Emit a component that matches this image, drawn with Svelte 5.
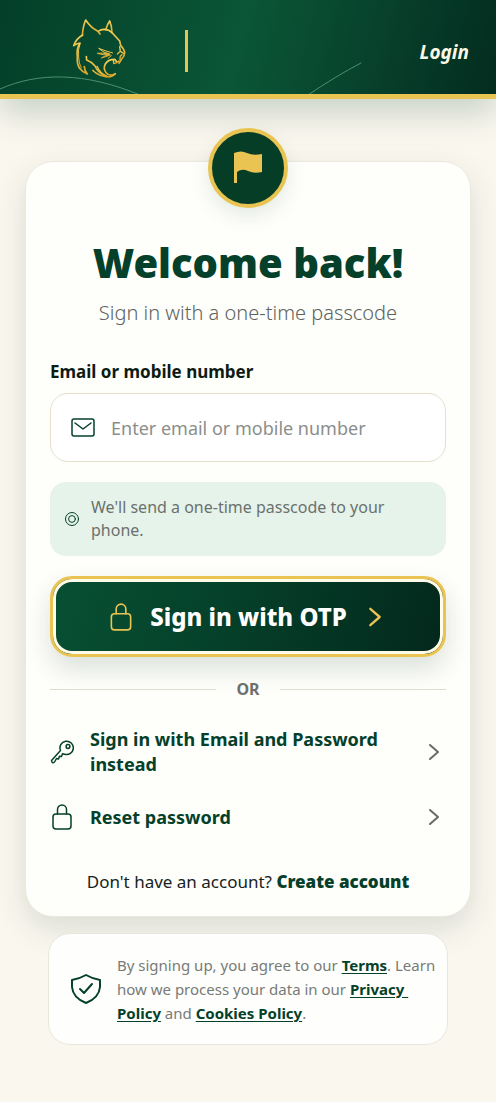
<script>
  let contact = $state('');
</script>

{#snippet lock()}
  <svg class="icon" viewBox="0 0 24 28" aria-hidden="true">
    <rect x="3" y="11" width="18" height="15" rx="3" />
    <path d="M7.500 11V6.500a4.500 4.500 0 0 1 9 0V11" />
  </svg>
{/snippet}

{#snippet chevron()}
  <svg class="chevron" viewBox="0 0 12 20" aria-hidden="true">
    <path d="M2 3l8 7-8 7" />
  </svg>
{/snippet}

<div class="page">
  <header class="topbar">
    <svg class="swoosh" viewBox="0 0 496 94" preserveAspectRatio="none" aria-hidden="true">
      <path d="M0 89C38 72 85 72 140 95M308 95Q336 76 361 63" />
    </svg>
    <a class="brand" href="#home" aria-label="Home">
      <svg class="logo" viewBox="0 0 240 225" aria-hidden="true">
        <defs>
          <linearGradient id="gold" x1="0" y1="0" x2="0" y2="1">
            <stop offset="0" stop-color="#f2d057" />
            <stop offset="1" stop-color="#d9a52c" />
          </linearGradient>
        </defs>
        <g fill="none" stroke="url(#gold)" stroke-width="5" stroke-linecap="round" stroke-linejoin="round">
          <path d="M67 76Q69 48 77 30Q92 52 109 61Q116 65 120 72" />
          <path d="M137 59Q142 43 149 33Q156 48 156 68" />
          <path d="M117 62Q140 52 157 69Q168 81 179 93L182 106Q194 120 194 128Q194 138 185 147L177 160" />
          <path d="M179 110L181 124L191 130M181 124L172 132M186 134Q179 138 180 148" stroke-width="4" />
          <path d="M68 75Q48 86 41 107Q49 101 60 99Q48 118 52 141Q50 159 58 174Q66 185 82 192Q73 180 73 170" />
          <path d="M60 101Q53 120 56 141Q56 160 64 174" stroke-width="3" />
          <path d="M79 140L80 150Q96 156 105 168Q113 188 139 200" />
          <path d="M166 191Q151 200 140 190Q128 176 136 162Q144 148 164 148L170 155" />
          <path d="M98 181Q116 200 147 201Q160 200 166 191M111 169Q119 190 143 200" stroke-width="4" />
          <path d="M160 149L161 161Q169 160 177 153" stroke-width="4" />
          <path d="M158 129Q133 122 116 115Q131 129 149 132Q126 128 112 130Q129 136 148 134Q134 137 124 144Q138 140 151 135M154 137L144 146" stroke-width="3" />
        </g>
      </svg>
    </a>
    <span class="rule"></span>
    <a class="login" href="#login">Login</a>
  </header>

  <main>
    <section class="card">
      <div class="badge">
        <svg viewBox="0 0 30 34" aria-hidden="true">
          <path d="M1 2Q8-1 14 2T29 3V21Q21 23 15 20T4 21V32H1Z" />
        </svg>
      </div>

      <h1>Welcome back!</h1>
      <p class="subtitle">Sign in with a one-time passcode</p>

      <form onsubmit={(e) => e.preventDefault()}>
        <label for="contact">Email or mobile number</label>
        <div class="field">
          <svg class="mail" viewBox="0 0 24 20" aria-hidden="true">
            <rect x="1" y="1" width="22" height="17" rx="2" />
            <path d="M4 5l8 6 8-6" />
          </svg>
          <input id="contact" type="text" placeholder="Enter email or mobile number" bind:value={contact} />
        </div>

        <div class="hint">
          <svg viewBox="0 0 16 16" aria-hidden="true">
            <circle cx="8" cy="8" r="6.5" />
            <circle cx="8" cy="8" r="3.4" />
          </svg>
          <p>We'll send a one-time passcode to your phone.</p>
        </div>

        <button class="submit" type="submit">
          {@render lock()}
          <span>Sign in with OTP</span>
          {@render chevron()}
        </button>
      </form>

      <div class="divider"><span>OR</span></div>

      <nav class="options">
        <a href="#password">
          <svg class="icon" viewBox="0 0 24 28" aria-hidden="true">
            <path d="M10.500 12.500A6.700 6.700 0 1 1 14.500 16.200L12.500 15.800L11.500 18.500L9.500 18.200L8.500 21L6.500 20.500L4.500 24Q2 26 1.500 22.500Z" />
            <circle cx="18" cy="8.500" r="1.900" />
          </svg>
          <span>Sign in with Email and Password instead</span>
          {@render chevron()}
        </a>
        <a href="#reset">
          {@render lock()}
          <span>Reset password</span>
          {@render chevron()}
        </a>
      </nav>

      <p class="signup">Don't have an account? <a href="#create">Create account</a></p>
    </section>

    <aside class="legal">
      <svg viewBox="0 0 32 32" aria-hidden="true">
        <path d="M16 2Q23 6 30 7V14Q29 25 16 30Q3 25 2 14V7Q9 6 16 2Z" />
        <path d="M10 16l4 4 8-9" />
      </svg>
      <p>
        By signing up, you agree to our <a href="#terms">Terms</a>. Learn how we process your data in our
        <a href="#privacy">Privacy&nbsp;<wbr />Policy</a> and <a href="#cookies">Cookies Policy</a>.
      </p>
    </aside>
  </main>
</div>

<style>
  :global(body) {
    margin: 0;
    background: #faf7ef;
  }

  .page {
    --green: #04402a;
    --gold: #e9c452;
    --muted: #6c716d;
    min-height: 100vh;
    font-family: 'Noto Sans', sans-serif;
    color: #17221c;
  }

  .page,
  .page * {
    box-sizing: border-box;
  }

  h1,
  p {
    margin: 0;
  }

  svg {
    flex: none;
    fill: none;
    stroke: var(--green);
    stroke-linecap: round;
    stroke-linejoin: round;
  }

  .topbar {
    position: relative;
    display: flex;
    align-items: center;
    height: 99px;
    padding: 0 27px 0 60px;
    border-bottom: 5px solid var(--gold);
    background: linear-gradient(105deg, #043f29 0%, #0a5636 48%, #08432d 72%, #032c1f 100%);
    box-shadow: 0 14px 32px rgba(4, 64, 42, 0.2);
  }

  .swoosh {
    position: absolute;
    inset: 0;
    width: 100%;
    height: 100%;
    stroke: #4b8f70;
    stroke-width: 1;
  }

  .brand {
    position: relative;
    display: flex;
  }

  .logo {
    width: 80px;
    height: 75px;
  }

  .rule {
    width: 3px;
    height: 42px;
    margin: 8px 0 0 45px;
    background: var(--gold);
  }

  .login {
    position: relative;
    margin: 10px 0 0 auto;
    color: #fbf9e6;
    font-size: 19px;
    font-style: italic;
    font-weight: 700;
    text-decoration: none;
  }

  main {
    padding: 62px 25px 56px;
  }

  .card {
    position: relative;
    padding: 76px 24px 20px;
    border: 1px solid #ebe9df;
    border-radius: 28px;
    background: #fefefa;
    box-shadow: 0 12px 32px rgba(4, 50, 32, 0.13);
  }

  .badge {
    position: absolute;
    top: -34px;
    left: 50%;
    display: grid;
    place-items: center;
    width: 80px;
    height: 80px;
    border: 4px solid var(--gold);
    border-radius: 50%;
    background: #053d27;
    box-shadow: 0 8px 20px rgba(4, 64, 42, 0.1);
    transform: translateX(-50%);
  }

  .badge svg {
    width: 30px;
    height: 34px;
    fill: var(--gold);
    stroke: none;
  }

  h1 {
    color: var(--green);
    font-size: 40px;
    font-weight: 900;
    line-height: 50px;
    text-align: center;
  }

  .subtitle {
    margin-top: 11px;
    color: #5c625e;
    font-size: 20px;
    font-weight: 300;
    line-height: 28px;
    text-align: center;
  }

  label {
    display: block;
    margin-top: 33px;
    color: #0d1b13;
    font-size: 17px;
    font-weight: 700;
    line-height: 24px;
  }

  .field {
    display: flex;
    align-items: center;
    gap: 16px;
    height: 69px;
    margin-top: 9px;
    padding: 0 20px;
    border: 1px solid #e5dfcf;
    border-radius: 18px;
    background: #fff;
  }

  .mail {
    width: 24px;
    height: 20px;
    stroke-width: 1.5;
  }

  input {
    flex: 1;
    min-width: 0;
    padding: 0;
    border: 0;
    outline: 0;
    background: none;
    color: #17221c;
    font: 400 18px/28px 'Noto Sans', sans-serif;
  }

  input::placeholder {
    color: #8b8e8b;
    opacity: 1;
  }

  .hint {
    display: flex;
    align-items: center;
    gap: 11px;
    margin-top: 20px;
    padding: 14px;
    border-radius: 16px;
    background: #e5f3eb;
    color: var(--muted);
    font-size: 16px;
    line-height: 23px;
  }

  .hint svg {
    width: 16px;
    height: 16px;
  }

  .submit {
    display: flex;
    align-items: center;
    justify-content: center;
    gap: 16px;
    width: 100%;
    height: 81px;
    margin-top: 20px;
    padding: 3px 9px 3px 3px;
    border: 3px solid var(--gold);
    border-radius: 22px;
    background: linear-gradient(105deg, #075033, #05402a 45%, #03281c);
    box-shadow:
      inset 0 0 0 3px #fffbe9,
      0 12px 26px rgba(4, 50, 32, 0.14);
    color: #fff;
    font: 800 24px/30px 'Noto Sans', sans-serif;
  }

  .icon {
    width: 24px;
    height: 28px;
    stroke-width: 1.5;
  }

  .submit .icon {
    width: 26px;
    height: 30px;
    stroke: var(--gold);
  }

  .chevron {
    width: 12px;
    height: 20px;
    stroke: #666b68;
    stroke-width: 2;
  }

  .submit .chevron {
    width: 14px;
    height: 24px;
    margin-left: 5px;
    stroke: var(--gold);
  }

  .divider {
    display: flex;
    align-items: center;
    gap: 20px;
    margin-top: 20px;
    color: var(--muted);
    font-size: 16px;
    font-weight: 700;
    line-height: 24px;
  }

  .divider::before,
  .divider::after {
    content: '';
    flex: 1;
    height: 1px;
    background: #deddd2;
  }

  .options {
    display: grid;
    gap: 26px;
    margin-top: 26px;
  }

  .options a {
    display: flex;
    align-items: center;
    gap: 16px;
    color: var(--green);
    font-size: 18px;
    font-weight: 700;
    line-height: 25px;
    text-decoration: none;
  }

  .options span {
    flex: 1;
  }

  .options .chevron {
    margin-right: 6px;
  }

  .signup {
    margin-top: 37px;
    font-size: 17px;
    line-height: 28px;
    text-align: center;
  }

  .signup a {
    color: var(--green);
    font-weight: 900;
    text-decoration: none;
  }

  .legal {
    position: relative;
    display: flex;
    align-items: center;
    gap: 15px;
    margin: 16px 23px 0;
    padding: 19px 8px 19px 21px;
    border: 1px solid #e9e7dd;
    border-radius: 22px;
    background: #fefefc;
    color: #777b78;
    font-size: 15px;
    line-height: 24px;
  }

  .legal svg {
    width: 32px;
    height: 32px;
    stroke-width: 2;
  }

  .legal a {
    color: var(--green);
    font-weight: 700;
    text-underline-offset: 2px;
  }
</style>
